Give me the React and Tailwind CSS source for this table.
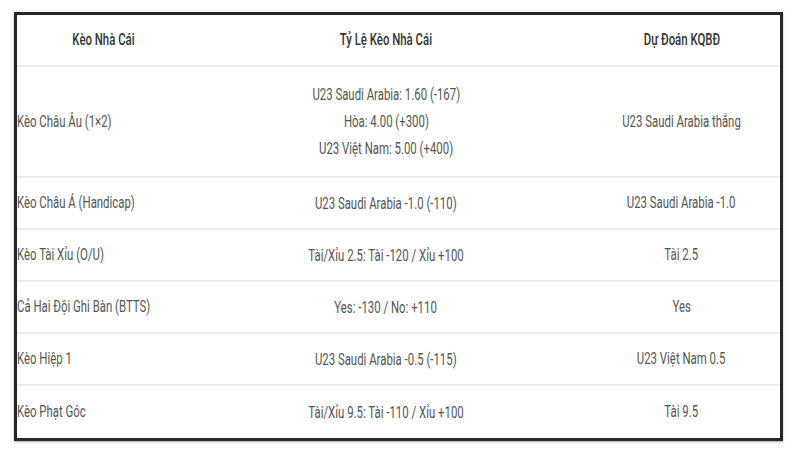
import React from "react";

const rows = [
  {
    a: "Kèo Châu Âu (1×2)",
    b: ["U23 Saudi Arabia: 1.60 (-167)", "Hòa: 4.00 (+300)", "U23 Việt Nam: 5.00 (+400)"],
    c: "U23 Saudi Arabia thắng",
    tall: true,
  },
  { a: "Kèo Châu Á (Handicap)", b: ["U23 Saudi Arabia -1.0 (-110)"], c: "U23 Saudi Arabia -1.0" },
  { a: "Kèo Tài Xỉu (O/U)", b: ["Tài/Xỉu 2.5: Tài -120 / Xỉu +100"], c: "Tài 2.5" },
  { a: "Cả Hai Đội Ghi Bàn (BTTS)", b: ["Yes: -130 / No: +110"], c: "Yes" },
  { a: "Kèo Hiệp 1", b: ["U23 Saudi Arabia -0.5 (-115)"], c: "U23 Việt Nam 0.5" },
  { a: "Kèo Phạt Góc", b: ["Tài/Xỉu 9.5: Tài -110 / Xỉu +100"], c: "Tài 9.5" },
];

function T({ children, left }) {
  return (
    <span
      className={
        "inline-block whitespace-nowrap scale-x-[0.67] " + (left ? "origin-left" : "origin-center")
      }
    >
      {children}
    </span>
  );
}

export default function App() {
  return (
    <div className="w-[800px] h-[450px] bg-white pt-[12px] pl-[14px]" style={{ fontFamily: "Roboto, 'Noto Sans', sans-serif" }}>
      <div className="w-[769px] h-[429px] border-[3px] border-[#262626] shadow-[0_1px_2px_rgba(0,0,0,0.35)] flex flex-col">
        <div className="grid grid-cols-[172px_394px_197px] h-[52px] border-b-2 border-[#ececec] text-[17px] font-medium text-[#333]">
          <div className="flex items-center justify-center"><T>Kèo Nhà Cái</T></div>
          <div className="flex items-center justify-center"><T>Tỷ Lệ Kèo Nhà Cái</T></div>
          <div className="flex items-center justify-center"><T>Dự Đoán KQBĐ</T></div>
        </div>
        {rows.map((r, i) => (
          <div
            key={i}
            className={
              "grid grid-cols-[172px_394px_197px] text-[17px] text-[#555] " +
              (r.tall ? "h-[111px] " : "h-[52px] ") +
              (i < rows.length - 1 ? "border-b-2 border-[#ececec]" : "")
            }
          >
            <div className="flex items-center"><T left>{r.a}</T></div>
            <div className="flex flex-col items-center justify-center leading-[27px]">
              {r.b.map((t, j) => (
                <T key={j}>{t}</T>
              ))}
            </div>
            <div className="flex items-center justify-center"><T>{r.c}</T></div>
          </div>
        ))}
      </div>
    </div>
  );
}
